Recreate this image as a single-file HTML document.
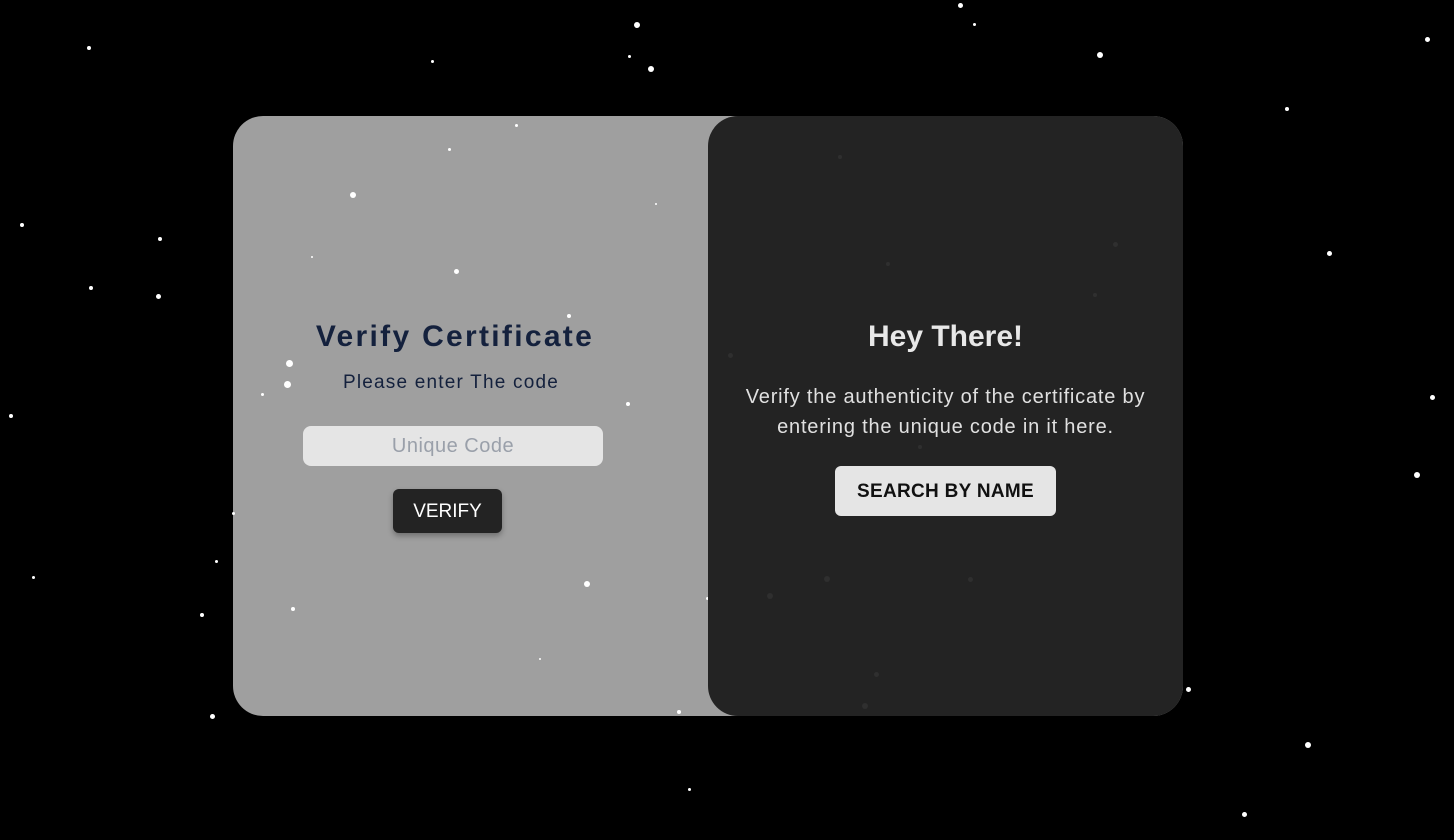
<!DOCTYPE html>
<html><head><style>
body{margin:0;width:1454px;height:840px;background:#000;overflow:hidden;position:relative;font-family:"Liberation Sans",sans-serif}
.card{position:absolute;left:233px;top:116px;width:950px;height:600px;border-radius:30px;background:#9f9f9f;overflow:hidden}
.s{position:absolute;background:#fff;border-radius:50%}
.d{position:absolute;background:#2f2f2f;border-radius:50%}
.right{position:absolute;left:708px;top:116px;width:475px;height:600px;border-radius:30px;background:#232323;z-index:3;text-align:center;color:#e6e6e6}
.left{position:absolute;left:233px;top:116px;width:475px;height:600px;z-index:4;text-align:center}
h1{margin:0;position:absolute;left:0;width:444px;top:204px;font-size:30px;font-weight:bold;color:#14213d;letter-spacing:2.3px}
.sub{position:absolute;left:0;width:436px;top:256px;font-size:19px;color:#14213d;letter-spacing:1.2px}
.inp{position:absolute;left:70px;top:310px;width:300px;height:40px;background:#e5e5e5;border-radius:8px;color:#9aa0aa;font-size:20px;letter-spacing:.5px;line-height:40px}
.vb{position:absolute;left:160px;top:373px;width:109px;height:44px;background:#232323;border-radius:6px;color:#fff;font-size:19px;line-height:46px;box-shadow:0 3px 6px rgba(0,0,0,.3)}
h2{margin:0;position:absolute;left:0;right:0;top:204px;font-size:30px;font-weight:bold;color:#e8e8e8}
.p{position:absolute;left:0;right:0;top:266px;font-size:20px;letter-spacing:.8px;line-height:30px;color:#e0e0e0}
.sb{position:absolute;left:127px;top:350px;width:221px;height:50px;background:#e5e5e5;border-radius:6px;color:#111;font-weight:bold;font-size:19px;line-height:52px;letter-spacing:.3px}
</style></head><body>
<div class="card"></div>
<div style="position:absolute;left:0;top:0;width:1454px;height:840px;z-index:2">
<div class="s" style="left:634px;top:22px;width:6px;height:6px"></div>
<div class="s" style="left:958px;top:3px;width:5px;height:5px"></div>
<div class="s" style="left:973px;top:23px;width:3px;height:3px"></div>
<div class="s" style="left:87px;top:46px;width:4px;height:4px"></div>
<div class="s" style="left:431px;top:60px;width:3px;height:3px"></div>
<div class="s" style="left:628px;top:55px;width:3px;height:3px"></div>
<div class="s" style="left:648px;top:66px;width:6px;height:6px"></div>
<div class="s" style="left:1097px;top:52px;width:6px;height:6px"></div>
<div class="s" style="left:1425px;top:37px;width:5px;height:5px"></div>
<div class="s" style="left:1285px;top:107px;width:4px;height:4px"></div>
<div class="s" style="left:20px;top:223px;width:4px;height:4px"></div>
<div class="s" style="left:158px;top:237px;width:4px;height:4px"></div>
<div class="s" style="left:89px;top:286px;width:4px;height:4px"></div>
<div class="s" style="left:156px;top:294px;width:5px;height:5px"></div>
<div class="s" style="left:1327px;top:251px;width:5px;height:5px"></div>
<div class="s" style="left:9px;top:414px;width:4px;height:4px"></div>
<div class="s" style="left:1430px;top:395px;width:5px;height:5px"></div>
<div class="s" style="left:1414px;top:472px;width:6px;height:6px"></div>
<div class="s" style="left:32px;top:576px;width:3px;height:3px"></div>
<div class="s" style="left:215px;top:560px;width:3px;height:3px"></div>
<div class="s" style="left:200px;top:613px;width:4px;height:4px"></div>
<div class="s" style="left:210px;top:714px;width:5px;height:5px"></div>
<div class="s" style="left:1186px;top:687px;width:5px;height:5px"></div>
<div class="s" style="left:1305px;top:742px;width:6px;height:6px"></div>
<div class="s" style="left:688px;top:788px;width:3px;height:3px"></div>
<div class="s" style="left:1242px;top:812px;width:5px;height:5px"></div>
<div class="s" style="left:515px;top:124px;width:3px;height:3px"></div>
<div class="s" style="left:448px;top:148px;width:3px;height:3px"></div>
<div class="s" style="left:350px;top:192px;width:6px;height:6px"></div>
<div class="s" style="left:655px;top:203px;width:2px;height:2px"></div>
<div class="s" style="left:311px;top:256px;width:2px;height:2px"></div>
<div class="s" style="left:454px;top:269px;width:5px;height:5px"></div>
<div class="s" style="left:567px;top:314px;width:4px;height:4px"></div>
<div class="s" style="left:286px;top:360px;width:7px;height:7px"></div>
<div class="s" style="left:284px;top:381px;width:7px;height:7px"></div>
<div class="s" style="left:261px;top:393px;width:3px;height:3px"></div>
<div class="s" style="left:626px;top:402px;width:4px;height:4px"></div>
<div class="s" style="left:232px;top:512px;width:3px;height:3px"></div>
<div class="s" style="left:584px;top:581px;width:6px;height:6px"></div>
<div class="s" style="left:291px;top:607px;width:4px;height:4px"></div>
<div class="s" style="left:539px;top:658px;width:2px;height:2px"></div>
<div class="s" style="left:677px;top:710px;width:4px;height:4px"></div>
<div class="s" style="left:706px;top:597px;width:3px;height:3px"></div>
</div>
<div class="right">
<div class="d" style="left:130px;top:39px;width:4px;height:4px"></div>
<div class="d" style="left:405px;top:126px;width:5px;height:5px"></div>
<div class="d" style="left:178px;top:146px;width:4px;height:4px"></div>
<div class="d" style="left:385px;top:177px;width:4px;height:4px"></div>
<div class="d" style="left:20px;top:237px;width:5px;height:5px"></div>
<div class="d" style="left:116px;top:460px;width:6px;height:6px"></div>
<div class="d" style="left:59px;top:477px;width:6px;height:6px"></div>
<div class="d" style="left:260px;top:461px;width:5px;height:5px"></div>
<div class="d" style="left:166px;top:556px;width:5px;height:5px"></div>
<div class="d" style="left:154px;top:587px;width:6px;height:6px"></div>
<div class="d" style="left:210px;top:329px;width:4px;height:4px"></div>
<h2>Hey There!</h2>
<div class="p">Verify the authenticity of the certificate by<br>entering the unique code in it here.</div>
<div class="sb">SEARCH BY NAME</div>
</div>
<div class="left">
<h1>Verify Certificate</h1>
<div class="sub">Please enter The code</div>
<div class="inp">Unique Code</div>
<div class="vb">VERIFY</div>
</div>
</body></html>
